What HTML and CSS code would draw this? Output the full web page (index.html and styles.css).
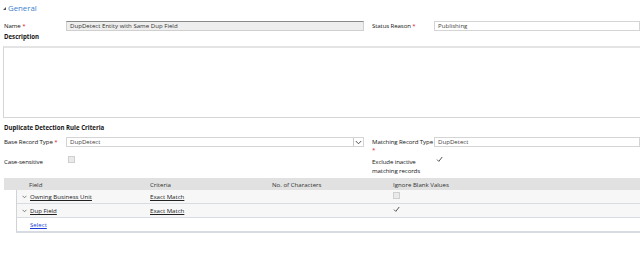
FILE: index.html
```html
<!DOCTYPE html>
<html>
<head>
<meta charset="utf-8">
<link rel="stylesheet" href="styles.css">
</head>
<body>
<div class="page">
  <div class="section-title"><span class="tri"></span>General</div>

  <div class="row r-name">
    <div class="lbl">Name <span class="req">*</span></div>
    <div class="input ro">DupDetect Entity with Same Dup Field</div>
    <div></div>
    <div class="lbl">Status Reason <span class="req">*</span></div>
    <div class="input">Publishing</div>
  </div>

  <div class="desc-lbl">Description</div>
  <div class="textarea"></div>

  <div class="crit-title">Duplicate Detection Rule Criteria</div>

  <div class="row r-base">
    <div class="lbl">Base Record Type <span class="req">*</span></div>
    <div class="input select">DupDetect<span class="dd"><svg width="7" height="5" viewBox="0 0 7 5"><path d="M0.8 1 L3.5 3.8 L6.2 1" fill="none" stroke="#444" stroke-width="0.9"/></svg></span></div>
    <div></div>
    <div class="lbl">Matching Record Type<br><span class="req">*</span></div>
    <div class="input">DupDetect</div>
  </div>

  <div class="row r-case">
    <div class="lbl">Case-sensitive</div>
    <div><span class="cb dis"></span></div>
    <div></div>
    <div class="lbl">Exclude inactive<br>matching records</div>
    <div><span class="cb chk"><svg width="7" height="7" viewBox="0 0 7 7"><path d="M1 3.6 L2.8 5.4 L6.2 1" fill="none" stroke="#555" stroke-width="1"/></svg></span></div>
  </div>

  <div class="grid">
    <div class="g-head">
      <div class="c-field">Field</div>
      <div class="c-crit">Criteria</div>
      <div class="c-num">No. of Characters</div>
      <div class="c-ign">Ignore Blank Values</div>
    </div>
    <div class="g-body">
      <div class="g-row">
        <div class="c-field"><span class="chev"><svg width="5" height="4" viewBox="0 0 5 4"><path d="M0.6 0.8 L2.5 2.8 L4.4 0.8" fill="none" stroke="#666" stroke-width="0.8"/></svg></span><a>Owning Business Unit</a></div>
        <div class="c-crit"><a>Exact Match</a></div>
        <div class="c-num"></div>
        <div class="c-ign"><span class="cb dis small"></span></div>
      </div>
      <div class="g-row">
        <div class="c-field"><span class="chev"><svg width="5" height="4" viewBox="0 0 5 4"><path d="M0.6 0.8 L2.5 2.8 L4.4 0.8" fill="none" stroke="#666" stroke-width="0.8"/></svg></span><a>Dup Field</a></div>
        <div class="c-crit"><a>Exact Match</a></div>
        <div class="c-num"></div>
        <div class="c-ign"><span class="cb chk small"><svg width="7" height="7" viewBox="0 0 7 7"><path d="M1 3.6 L2.8 5.4 L6.2 1" fill="none" stroke="#555" stroke-width="1"/></svg></span></div>
      </div>
      <div class="g-row last">
        <div class="c-field"><a class="sel">Select</a></div>
      </div>
    </div>
  </div>
</div>
</body>
</html>
```

FILE: styles.css
```css
html, body {
  margin: 0;
  padding: 0;
  background: #fff;
}
body {
  width: 640px;
  height: 276px;
  overflow: hidden;
  font-family: "Open Sans", "Liberation Sans", sans-serif;
  font-size: 6.1px;
  color: #151515;
}
.page {
  padding-top: 3px;
}
.section-title {
  display: flex;
  align-items: center;
  gap: 2px;
  padding-left: 3px;
  height: 9px;
  font-size: 7.8px;
  color: #3a7fd0;
}
.tri {
  width: 0;
  height: 0;
  border-left: 3px solid transparent;
  border-bottom: 3px solid #555;
  margin-top: 2px;
}
.row {
  display: grid;
  grid-template-columns: 62px 298px 8px 62px 1fr;
  padding-left: 4px;
  align-items: center;
}
.r-name {
  margin-top: 9px;
  height: 10px;
}
.lbl {
  line-height: 8px;
  white-space: nowrap;
  letter-spacing: -0.1px;
}
.req {
  color: #e02020;
}
.input {
  height: 8px;
  border: 1px solid #d4d4d4;
  background: #fff;
  padding-left: 3px;
  line-height: 8px;
  color: #444;
  position: relative;
  white-space: nowrap;
}
.input.ro {
  background: #eeeeee;
  border-color: #cfcfcf;
  border-top: 1px solid #8a8a8a;
  color: #333;
}
.desc-lbl {
  margin-top: 2px;
  padding-left: 4px;
  font-weight: bold;
  height: 8px;
  line-height: 8px;
}
.textarea {
  margin-top: 5px;
  margin-left: 3px;
  width: 650px;
  height: 69px;
  border: 1px solid #d6d6d6;
  border-top: 2px solid #e4e4e4;
}
.crit-title {
  margin-top: 6px;
  padding-left: 4px;
  font-weight: bold;
  height: 8px;
  line-height: 8px;
}
.r-base {
  margin-top: 5px;
  height: 12px;
  align-items: start;
}
.r-base .lbl {
  margin-top: 1px;
}
.select .dd {
  position: absolute;
  right: 0;
  top: 0;
  width: 9px;
  height: 8px;
  border-left: 1px solid #c8c8c8;
  display: flex;
  align-items: center;
  justify-content: center;
}
.r-case {
  margin-top: 7px;
  height: 16px;
  align-items: start;
}
.r-case .lbl {
  margin-top: 1px;
  line-height: 9px;
}
.cb {
  display: inline-flex;
  align-items: center;
  justify-content: center;
  width: 7px;
  height: 7px;
  box-sizing: border-box;
  margin-left: 2px;
}
.cb.dis {
  border: 1px solid #cfcfcf;
  background: #eaeaea;
}
.cb.chk {
  border: none;
}
.grid {
  margin-top: 6px;
  margin-left: 4px;
  width: 640px;
}
.g-head, .g-row {
  display: grid;
  grid-template-columns: 146px 122px 121px 1fr;
  align-items: center;
}
.g-head {
  height: 12px;
  background: #e1e1e1;
  color: #333;
}
.g-head .c-field {
  padding-left: 25px;
}
.g-body {
  margin-left: 12px;
  border-left: 1px solid #cfd3d8;
  border-bottom: 2px solid #d6dce2;
}
.g-body .g-row {
  grid-template-columns: 133px 122px 121px 1fr;
  height: 13px;
  background: #f7f7f7;
  border-bottom: 1px solid #d6dce2;
}
.g-body .g-row.last {
  background: #fff;
  border-bottom: none;
}
.g-body .c-field {
  padding-left: 5px;
  display: flex;
  align-items: center;
}
.chev {
  display: inline-flex;
  width: 8px;
}
a {
  color: #222;
  text-decoration: underline;
}
a.sel {
  color: #1a3fd8;
  padding-left: 8px;
}
.g-body .c-ign .cb {
  margin-left: 0;
}
```
